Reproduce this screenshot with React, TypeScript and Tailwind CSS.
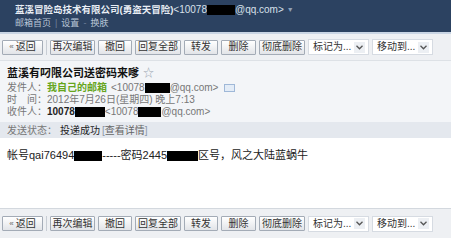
import React from "react";

const F = { fontFamily: '"Liberation Sans", "Noto Sans CJK SC", sans-serif' };

function Btn({ children, w }: { children: React.ReactNode; w: string }) {
  return (
    <div
      className={`${w} h-[15px] flex items-center justify-center border border-[#a3abb6] bg-gradient-to-b from-[#ffffff] to-[#e2e4e8] text-[10px] leading-none text-[#333] rounded-[1px]`}
    >
      {children}
    </div>
  );
}

function Sel({ label }: { label: string }) {
  return (
    <div className="w-[61px] h-[16px] flex items-center justify-between bg-white border border-[#d6dbe2] pl-[4px] pr-[3px] text-[10px] leading-none text-[#333]">
      <span>{label}</span>
      <span className="w-[11px] h-[11px] flex items-center justify-center bg-[#eceff3]">
        <svg width="7" height="5" viewBox="0 0 7 5">
          <path d="M0.5 0.8 L3.5 3.8 L6.5 0.8" stroke="#555" strokeWidth="1.3" fill="none" />
        </svg>
      </span>
    </div>
  );
}

function Toolbar() {
  return (
    <div className="flex items-center gap-[3px] pl-[2px]">
      <Btn w="w-[41px]">
        <span className="text-[#666] mr-[2px] text-[8px]">«</span>返回
      </Btn>
      <div className="w-px h-[15px] bg-[#c8cdd4]" />
      <Btn w="w-[45px]">再次编辑</Btn>
      <Btn w="w-[34px]">撤回</Btn>
      <Btn w="w-[46px]">回复全部</Btn>
      <Btn w="w-[34px]">转发</Btn>
      <Btn w="w-[35px]">删除</Btn>
      <Btn w="w-[46px]">彻底删除</Btn>
      <Sel label="标记为..." />
      <Sel label="移动到..." />
    </div>
  );
}

function Black({ w }: { w: string }) {
  return <span className={`inline-block ${w} h-[10px] bg-black`} />;
}

export default function App() {
  return (
    <div style={F} className="w-[451px] h-[238px] bg-white overflow-hidden flex flex-col">
      <div className="h-[32px] shrink-0 bg-[#2c4261] pl-[15px] pt-[4px]">
        <div className="text-[9.5px] leading-[12px] font-bold text-[#e8edf4] flex items-center">
          <span>蓝溪冒险岛技术有限公司(勇盗天冒险)</span>
          <span className="font-normal text-[10px] text-[#d8e0ea]">&lt;10078</span>
          <Black w="w-[28px]" />
          <span className="font-normal text-[10px] text-[#d8e0ea]">@qq.com&gt;</span>
          <span className="ml-[3px] text-[7px] text-[#8fa0b8]">▼</span>
        </div>
        <div className="mt-[2px] text-[9px] leading-[11px] text-[#b8c5d6] flex items-center gap-[4px]">
          <span>邮箱首页</span>
          <span className="text-[#6f819b]">|</span>
          <span>设置</span>
          <span className="text-[#6f819b]">-</span>
          <span>换肤</span>
        </div>
      </div>
      <div className="h-[2px] shrink-0 bg-[#c9d5e4]" />
      <div className="h-[27px] shrink-0 bg-[#eef0f3] flex items-center border-b border-[#dde1e6]">
        <Toolbar />
      </div>
      <div className="bg-[#f3f5f8] pl-[7px] pt-[5px] shrink-0">
        <div className="text-[11px] leading-[14px] font-bold text-[#111] flex items-center">
          蓝溪有叼限公司送密码来嗲
          <span className="ml-[4px] text-[11px] font-normal text-[#9aa4b0]">☆</span>
        </div>
        <div className="mt-[2px] text-[10px] leading-[12px] text-[#777]">
          <div className="flex items-center">
            <span>发件人：</span>
            <span className="text-[#67a51d] font-bold">我自己的邮箱</span>
            <span className="ml-[4px]">&lt;10078</span>
            <Black w="w-[25px]" />
            <span>@qq.com&gt;</span>
            <span className="ml-[6px] inline-block w-[11px] h-[8px] border border-[#9fb8d8] bg-[#e3ecf7]" />
          </div>
          <div>时　间：2012年7月26日(星期四) 晚上7:13</div>
          <div className="flex items-center">
            <span>收件人：</span>
            <span className="text-[#222] font-bold">10078</span>
            <Black w="w-[30px]" />
            <span>&lt;10078</span>
            <Black w="w-[23px]" />
            <span>@qq.com&gt;</span>
          </div>
        </div>
        <div className="mt-[4px] -ml-[7px] pl-[7px] h-[16px] bg-[#e4e8ee] flex items-center text-[10px] text-[#777]">
          发送状态：<span className="ml-[3px] text-[#222]">投递成功</span>
          <span className="ml-[2px] text-[#8a96a8]">[</span>
          <span className="text-[#666]">查看详情</span>
          <span className="text-[#8a96a8]">]</span>
        </div>
      </div>
      <div className="flex-1 bg-white pl-[7px] pt-[11px] text-[11px] leading-[13px] text-[#222]">
        <div className="flex items-center">
          帐号qai76494
          <Black w="w-[28px]" />
          -----密码2445
          <Black w="w-[31px]" />
          区号，风之大陆蓝蜗牛
        </div>
      </div>
      <div className="h-[30px] shrink-0 bg-[#eef0f3] border-t border-[#d3d8de] flex items-center">
        <Toolbar />
      </div>
    </div>
  );
}
